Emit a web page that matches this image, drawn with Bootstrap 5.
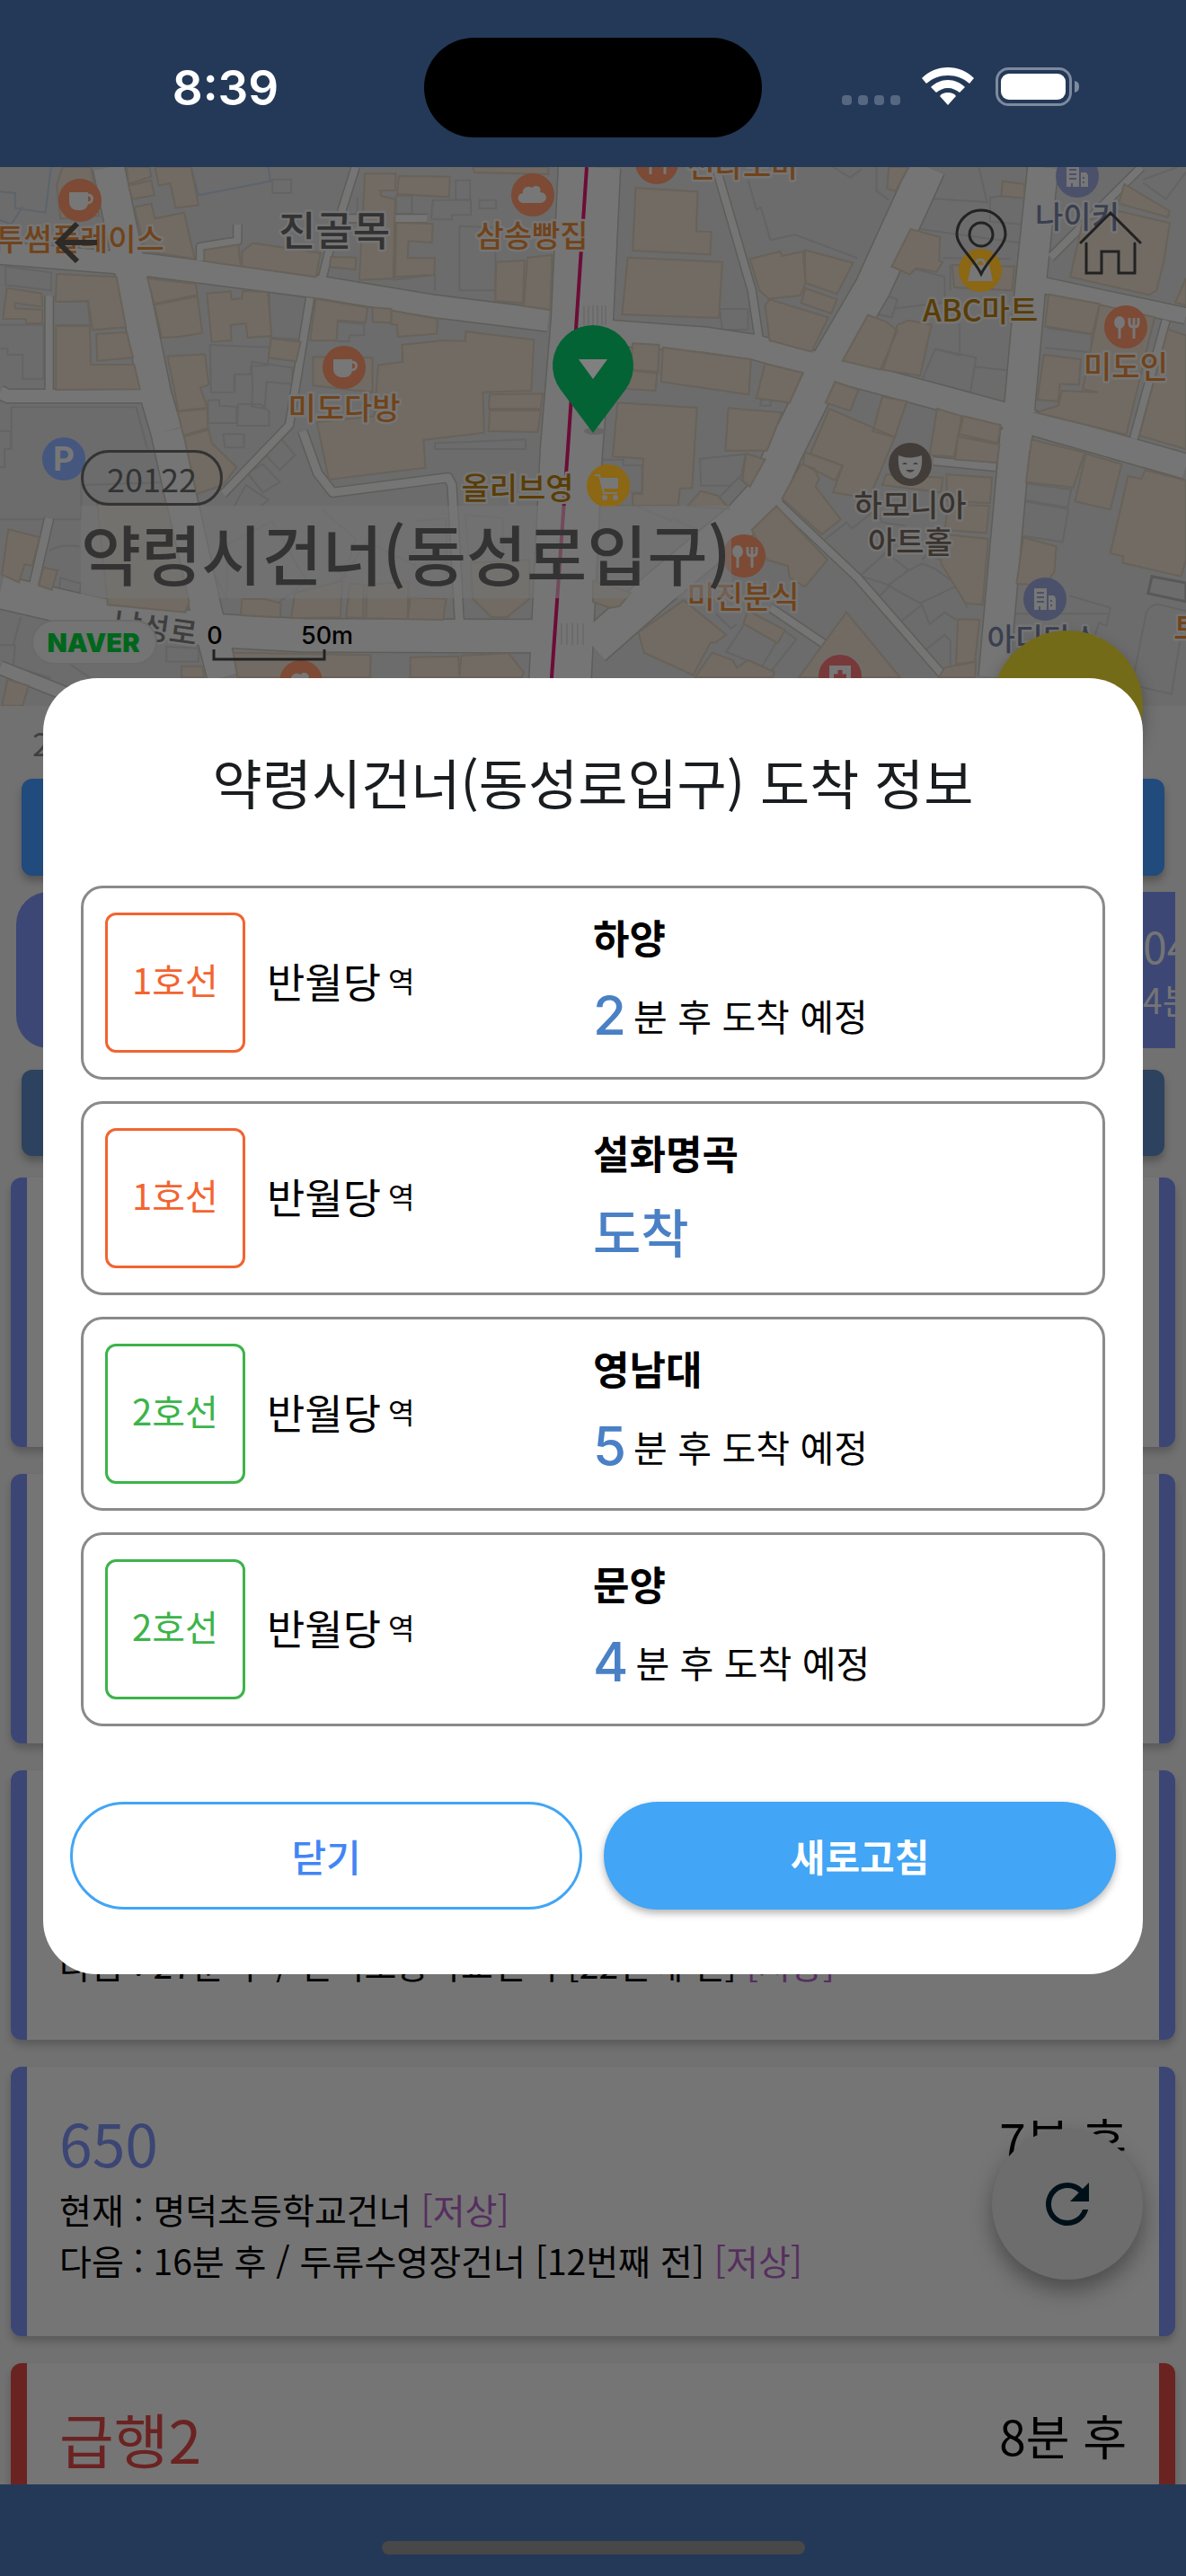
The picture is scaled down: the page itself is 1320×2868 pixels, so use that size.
<!DOCTYPE html>
<html lang="ko">
<head>
<meta charset="utf-8">
<meta name="viewport" content="width=device-width, initial-scale=1">
<title>약령시건너(동성로입구)</title>
<link href="https://cdn.jsdelivr.net/npm/bootstrap@5.3.0/dist/css/bootstrap.min.css" rel="stylesheet">
<style>
body{font-family:"Noto Sans CJK KR","Noto Sans",sans-serif;background:#717171;color:#000;font-size:39px;line-height:57px}
.status-bar{height:186px;background:#243957;color:#fff;padding-top:42px}
.island{width:376px;height:111px;border-radius:56px;background:#000}
.clock{font:600 53px/113px Inter,sans-serif;padding-left:30px}
.indicators{gap:24px;padding-right:30px;height:108px}
.map-area{height:600px;background:#6c6c6c}
.map-tools{padding:12px}
.tool{width:144px;height:144px;border:0;background:none;padding:0}
.stop-head{padding:0 90px 120px}
.stop-no{font-size:36px;line-height:56px;border:3px solid #333;border-radius:31px;padding:0 26px;color:#333}
.stop-name{font-size:73px;line-height:103px;font-weight:500;color:#333;background:rgba(117,117,117,.6)}
.ad-dot{width:168px;height:168px;border-radius:50%;background:#746b18;top:516px;right:48px;border:0;box-shadow:0 9px 18px rgba(0,0,0,.3)}
.meta-line{font-size:36px;line-height:81px;padding-left:36px;color:#3f3f3f}
.wide-btn{margin:0 24px;border:0;border-radius:12px;box-shadow:0 6px 9px rgba(0,0,0,.25)}
.wide-a{height:108px;background:#214a7d;margin-bottom:18px}
.wide-b{height:96px;background:#2c425e;margin-bottom:24px}
.strip{height:174px;margin:0 12px 24px 18px;background:#3d4776;border-radius:36px 0 0 36px;color:#747474;padding-left:1254px}
.strip-a{font-size:48px;line-height:64px}
.strip-b{line-height:57px}
.bus{height:300px;margin:0 12px 30px;border-radius:12px;background:#757575;border:solid #3c4675;border-width:0 18px;padding:42px 36px 56px;box-shadow:0 6px 9px rgba(0,0,0,.2)}
.bus-red{border-color:#6b2322}
.bus-no{font-size:66px;line-height:82px;color:#3c4675;margin-bottom:6px}
.bus-red .bus-no{color:#6b2322}
.bus-eta{font-size:53px;line-height:76px}
.low{color:#552f5e}
.fab{width:168px;height:168px;border-radius:50%;border:0;background:#6d6d6d;right:48px;bottom:330px;box-shadow:0 12px 24px rgba(0,0,0,.35)}
.nav-strip{height:102px;background:#243957;padding-top:63px}
.nav-pill{width:471px;height:15px;border-radius:8px;background:#484848}
.sheet-wrap{top:186px;bottom:102px;padding:0 48px;z-index:5}
.sheet{border-radius:60px;background:#fff;padding:72px 30px}
.sheet h1{font-size:60px;line-height:86px;font-weight:400;color:#191d20;margin-bottom:73px}
.arrivals{gap:24px;padding:0 12px;margin-bottom:84px}
.arrival{height:216px;border:3px solid #8a8a8a;border-radius:24px;padding:0 24px}
.line-box{width:156px;height:156px;border:3px solid;border-radius:12px;font-size:40px;margin-right:24px;padding-bottom:6px}
.line-1{color:#f26430}
.line-2{color:#3cb44a}
.station{font-size:46px;line-height:64px;padding-bottom:6px}
.station small{font-size:32px}
.dest{font-size:44px;line-height:60px;font-weight:700;margin-bottom:12px}
.eta{font-size:41px;line-height:90px}
.eta b{font-size:58px;font-weight:500;color:#4a80c5}
.eta .num{font-family:Inter,sans-serif;font-size:60px}
.sheet-btn{height:120px;border-radius:60px;font-size:42px;line-height:60px}
.btn-shut{border:3px solid #42a5f5;color:#4285f4;font-weight:500;background:#fff}
.btn-again{background:#42a5f5;color:#fff;font-weight:700;border:0;box-shadow:0 4px 9px rgba(0,0,0,.3)}
.road-edge *{fill:none;stroke:#5d5d59;vector-effect:non-scaling-stroke;stroke-linejoin:round}
.road-top *{fill:none;stroke:#757575;vector-effect:non-scaling-stroke;stroke-linejoin:round}
.bldg{fill:#716b64;stroke:#686259;stroke-width:2}
.bldg path,.plot path{vector-effect:non-scaling-stroke}
.plot{fill:none;stroke:#646464;stroke-width:2}
.poi{font-size:34px;font-weight:500;text-anchor:middle;paint-order:stroke;stroke:#757575;stroke-width:5px;stroke-linejoin:round}
</style>
<script src="https://cdn.jsdelivr.net/npm/bootstrap@5.3.0/dist/js/bootstrap.bundle.min.js"></script>
</head>
<body>
<div class="vh-100 d-flex flex-column position-relative overflow-hidden">
<header class="status-bar d-flex flex-shrink-0">
  <div class="clock flex-fill w-25 text-center">8:39</div>
  <div class="island flex-shrink-0"></div>
  <div class="indicators flex-fill w-25 d-flex justify-content-center align-items-center">
    <svg width="65" height="42" viewBox="0 0 65 42" fill="#566782"><rect y="31" width="11" height="11" rx="4"/><rect x="18" y="31" width="11" height="11" rx="4"/><rect x="36" y="31" width="11" height="11" rx="4"/><rect x="54" y="31" width="11" height="11" rx="4"/></svg>
    <svg width="58" height="42" viewBox="0 0 58 42" fill="#fff"><path d="M29 0C18 0 8 4 0 12l5 6c7-6 15-9 24-9s17 3 24 9l5-6C50 4 40 0 29 0zM29 14c-7 0-14 3-19 8l6 6c4-3 8-5 13-5s9 2 13 5l6-6c-5-5-12-8-19-8zM29 28c-4 0-7 1-9 4l9 10 9-10c-2-3-5-4-9-4z"/></svg>
    <svg width="93" height="43" viewBox="0 0 93 43"><rect x="1.500" y="1.500" width="82" height="40" rx="13" fill="none" stroke="#7e8a9e" stroke-width="3"/><rect x="6" y="7" width="72" height="29" rx="9" fill="#fff"/><path d="M88 15c4 1 5 3 5 6.500s-1 5.500-5 6.500z" fill="#7e8a9e"/></svg>
  </div>
</header>
<main class="flex-fill overflow-hidden">
<section class="map-area position-relative">
<svg class="d-block w-100 h-100" viewBox="0 0 1320 600" preserveAspectRatio="xMidYMid slice">
<defs>
<g id="cup"><circle r="24" fill="#7c4a35"/><path d="M-12-9H9V2c0 6-4 9-8 9h-4c-5 0-9-4-9-9z" fill="#777"/><path d="M8-6c7-1 8 9 0 9" fill="none" stroke="#777" stroke-width="3"/></g>
<g id="bread"><circle r="24" fill="#7c4a35"/><path d="M-12 9c-6-2-6-10 1-11-1-6 6-9 10-6 5-5 12 0 9 5 7 0 9 7 5 10-2 2-4 2-6 2z" fill="#777"/></g>
<g id="food"><circle r="24" fill="#7c4a35"/><ellipse cx="-7" cy="-5" rx="6" ry="7" fill="#777"/><path d="M-7 0v13M9-2v15M4-10v6q0 4 5 4t5-4v-6M9-10v8" stroke="#777" stroke-width="3" fill="none"/></g>
<g id="tower"><circle r="24" fill="#4b516a"/><path d="M-12-12H2V12h-14zM4-4h6l2 3v13H4z" fill="#777"/><path d="M-9-7h8M-9-2h8M-9 3h8M-6 8v4M7 1v2M7 6v2" stroke="#4b516a" stroke-width="2"/></g>
</defs>
<g class="plot">
<g transform="translate(0 -6) scale(.42088 .33333)">
<path d="M135 18L120 170 40 155 40 105 0 100M0 195L30 210 60 150M505 18L525 112 715 65 710 18" stroke="#5d646c"/>
<path d="M720 60h50v45h-50zM1205 62h38v65h-38zM1145 128h100v50h-50v15h-55zM1267 128h45v28h-45zM1215 215l95 5v210h-95zM1047 115h42v60h-42zM945 120v80M15 350l120 20v60L15 412zM148 468h85l5 78h-88M0 545h115v180H60v-80H20v-20H0M712 435l108 20-20 140-85-8zM895 535l68 7v38h-38l-3 20h-30M555 612l158 8-5 60-45 3v27h-43v60h-62zM665 668l108 20v55l-68-8-5 90-35-8 3-60zM630 810h60l22 25v47h-85zM550 797l30-2v20l45 3v55h-75zM30 820h330l30 140M30 820v140M1150 940l240-12v32h-240zM1040 395l110-18v55"/>
</g>
<g transform="translate(660 -6) scale(.42088 .33333)">
<path d="M410 60l22 100 12-8 25 110 65-18 165 78M750 18v80l32 30M1020 18l22 118M885 122l160 14M845 222l290 50M1080 115l-30 5v80l85 10M635 18l45 35 30-28M335 492h75v70l-68-2zM755 440l50 20-15 60-60-15M800 490l130-20v-85l-130-45M905 625l108 30-15 115-128-40zM970 540v108l-60-20M1010 685l85 12M1200 555l118 22v60l-122-15M945 345v85M925 322l180 3M1455 60l90-42M1455 70l60 55 53-90M445 795h25v20h-28zM705 880l33 20"/>
</g>
<g transform="translate(0 294) scale(.42088 .33333)">
<path d="M0 0h28v60H12v60H0M655 140l40-30 45 60-45 35zM695 70l45-50 40 60-40 50zM620 250l30-70 60 50-20 20M0 295h215V180l240-10M590 10h55v45h-50zM600 540v-160l120-80 90 200-80 80M850 260l90 100-30 130M440 770v-50l85 5v45zM130 400q30-25 80-15M380 410h160l60 150M160 490l55 20-10 60-50-20zM0 715h40l-5 70 100 40M55 620L35 715M980 750v72M175 730v40l70 60M900 500l70-130 130 80M1100 300l80-10v200M1240 420l-10-140 100 10v120"/>
</g>
<g transform="translate(660 294) scale(.42088 .33333)">
<path d="M283 92l120-15-10 70-30 35h-78zM385 155l28 30-52 70-30-30zM20 95h60v20h50v90h-30M610 365l60-60 15 20 60-60M870 430l15-20 50 30 55 150M705 485l70-80 60 60-55 50 85 60 100-60-60-55-35-18-45 30M785 515l-75-30 35 85zM810 640l60-60 20 65 40-40 30 25M870 740l60-60 15 20v105M400 645l85 60-38 80-95-48zM510 670l28 25-75 120M325 610l40 50 15-15M1145 175l120 20-10 60-115-25M1140 235l117 25-15 110-105-20M1260 550l108 40-10 60-20-10-10 40M1568 600l-75-22q-25 5-30 30l-38 240 105 30 30-240M1100 610h260M745 260l20 45 60 10M0 250h110l100 50M210 290l100 60-80 130"/>
<path d="M1478 485l90 22v62l-100-27z" stroke="#585858" stroke-width="3"/>
</g>
</g>
<!-- streets -->
<g class="road-edge">
<g transform="translate(0 -6) scale(.42088 .33333)"><path d="M0 305L390 345 850 420 1150 483 1450 530" stroke-width="27"/><path d="M287 18L348 385 412 780 440 900" stroke-width="37"/><path d="M0 770L20 783H410" stroke-width="17"/><path d="M130 448V775M940 18L870 300 850 400M530 330V285L628 265V210M1130 190H880M820 455L765 880 590 1110" stroke-width="11"/></g>
<g transform="translate(660 -6) scale(.42088 .33333)"><path d="M0 567L300 595 430 620 600 680 1130 860 1568 1018" stroke-width="30"/><path d="M885 18L740 420 620 680 510 960" stroke-width="42"/><path d="M1190 18L1155 440 1118 960" stroke-width="36"/><path d="M1180 410L1568 515" stroke-width="20"/><path d="M325 18L420 430 440 600M1210 320L1450 18M1515 530L1430 925" stroke-width="11"/></g>
<g transform="translate(0 294) scale(.42088 .33333)"><path d="M440 0L545 600 590 822" stroke-width="37"/><path d="M0 537L250 610 560 665 800 682 1450 685" stroke-width="39"/><path d="M0 790L190 885" stroke-width="17"/><path d="M800 0L840 140 880 205 1185 155 1195 180 1215 640M130 290L90 510" stroke-width="12"/></g>
<g transform="translate(660 294) scale(.42088 .33333)"><path d="M530 0L455 210 390 300 180 520 0 720" stroke-width="43"/><path d="M1118 0L1060 822" stroke-width="36"/><path d="M490 240L700 490 930 822M470 590L610 710M900 100L1065 120" stroke-width="11"/></g>
<path d="M656 0L648 170 636 314 622 600" stroke-width="71"/>
</g>
<g class="road-top">
<g transform="translate(0 -6) scale(.42088 .33333)"><path d="M0 305L390 345 850 420 1150 483 1450 530" stroke-width="24"/><path d="M287 18L348 385 412 780 440 900" stroke-width="34"/><path d="M0 770L20 783H410" stroke-width="14"/><path d="M130 448V775M940 18L870 300 850 400M530 330V285L628 265V210M1130 190H880M820 455L765 880 590 1110" stroke-width="8"/></g>
<g transform="translate(660 -6) scale(.42088 .33333)"><path d="M0 567L300 595 430 620 600 680 1130 860 1568 1018" stroke-width="27"/><path d="M885 18L740 420 620 680 510 960" stroke-width="39"/><path d="M1190 18L1155 440 1118 960" stroke-width="33"/><path d="M1180 410L1568 515" stroke-width="17"/><path d="M325 18L420 430 440 600M1210 320L1450 18M1515 530L1430 925" stroke-width="8"/></g>
<g transform="translate(0 294) scale(.42088 .33333)"><path d="M440 0L545 600 590 822" stroke-width="34"/><path d="M0 537L250 610 560 665 800 682 1450 685" stroke-width="36"/><path d="M0 790L190 885" stroke-width="14"/><path d="M800 0L840 140 880 205 1185 155 1195 180 1215 640M130 290L90 510" stroke-width="9"/></g>
<g transform="translate(660 294) scale(.42088 .33333)"><path d="M530 0L455 210 390 300 180 520 0 720" stroke-width="40"/><path d="M1118 0L1060 822" stroke-width="33"/><path d="M490 240L700 490 930 822M470 590L610 710M900 100L1065 120" stroke-width="8"/></g>
<path d="M656 0L648 170 636 314 622 600" stroke-width="68"/>
</g>
<!-- buildings -->
<g class="bldg">
<g transform="translate(0 -6) scale(.42088 .33333)"><path d="M165 18L240 18 262 180 160 190 150 80zM335 18L395 18 400 50 340 75zM340 80L400 62 408 112 350 125zM410 18L505 18 525 145 465 155 450 72 420 80zM355 152L400 140 410 190 487 170 515 325 385 300zM540 295L630 277 637 350 540 332zM640 300L668 272 848 305 835 385 640 350zM965 40L1047 40 1045 95 1005 97 1008 115 1045 125 1040 390 950 395zM1055 48L1190 50 1187 118 1050 108zM1080 205L1145 208 1142 270 1080 265 1078 322 1150 322 1148 378 1045 385 1048 205zM875 318L942 320 940 360 872 352zM1312 335L1387 330 1383 472 1310 465zM1395 320L1460 312 1455 495 1385 482zM1250 18L1450 18 1450 42 1255 36z"/><path d="M150 375L308 385 333 553 245 562 233 465 147 468zM255 575L335 570 352 655 257 665zM148 548L237 548 240 678 355 678 370 760 148 762zM18 422L110 440 112 485 40 472V490L112 495V540L70 540 68 525 8 525zM390 390L518 408 522 445 408 475zM408 478L522 450 535 572 475 585 428 588zM547 440L610 433 612 460 640 457 642 432 708 435 718 582 655 588 650 540 610 545 612 597 560 602zM835 458L972 487 967 537 893 530 890 597 820 597zM985 487L1035 492 1035 538 985 535zM1035 497L1157 525 1155 575 1052 585 1050 545 1033 542zM717 590L795 602 783 667 710 655zM828 652L985 655 985 770 828 748zM1232 567L1412 595 1405 765 1277 770 1280 905 1120 930 1125 1022 870 1062 838 870 990 850 1000 680 1065 668 1063 612 1170 597 1230 600zM1295 778L1435 775 1430 825 1292 825zM1295 830L1430 830 1422 903 1292 900zM443 650L542 643 552 745 530 755 548 822 472 832zM470 835L548 825 550 890 485 915zM487 918L552 895 560 940 625 1020 590 1080 520 1110z"/></g>
<g transform="translate(660 -6) scale(.42088 .33333)"><path d="M113 88L277 100 273 232 313 235 310 310 105 297zM92 320L342 335 333 522 77 510zM415 325L495 300 500 315 555 300 562 408 548 447 465 458 440 430zM560 295L688 338 645 442 562 405zM562 423L645 460 630 507 550 472zM467 460L622 520 578 635 467 597 455 480zM840 225L918 252 915 330 925 335 908 368 855 355 838 377 790 350zM727 512L775 535 805 565 760 695 660 665zM805 545L835 530 895 545 865 715 767 695zM782 18L835 18 800 98 778 90zM1083 65L1142 75 1140 122 1080 115zM1205 443L1340 475 1320 575 1195 550zM1340 478L1485 520 1410 912 1172 838 1230 815 1240 765 1335 770 1295 760zM1192 645L1290 660 1285 745 1235 742 1230 800 1175 795zM1520 560L1568 580V960L1445 915zM1390 165L1525 205 1510 330 1490 430 1470 445 1262 385 1295 200zM1405 75L1525 165 1520 185 1390 140zM1540 470L1568 390V480z"/><path d="M105 607L175 612 172 702 100 695zM95 697L170 707 165 765 75 758zM185 620L418 660 412 778 180 735zM455 675L555 705 520 805 432 790zM65 805L275 822 262 1090 230 1092 225 1150 105 1150 105 1110 130 1110 133 992 52 985zM358 823L500 838 460 965 350 965zM640 735L702 762 680 832 615 805zM765 785L830 800 798 920 740 900zM910 825L975 850 955 985 890 980zM980 850L1078 880 1070 940 968 910zM965 918L1075 945 1068 1005 958 995zM950 345L1115 350 1108 430 955 420zM625 825L798 920 730 1125 635 1105 660 1015 575 975z"/></g>
<g transform="translate(0 294) scale(.42088 .33333)"><path d="M257 240L440 240 500 570 490 605 285 580zM22 328L105 355 85 450 65 445 50 505 5 480zM115 455L152 465 137 530 102 515zM640 560L700 560 742 575 742 622 637 615zM780 540L905 500 900 622 770 625zM925 510L962 512 960 625 915 622zM970 512L1080 505 1078 628 968 625zM1085 555L1180 560 1172 630 1078 628zM1245 440L1400 430 1400 560 1340 622 1300 622 1250 560zM617 740L980 748 978 822 628 822zM1085 755L1212 752 1215 822 1085 822zM1220 750L1345 742 1385 805 1380 822 1215 822zM480 785L535 785 540 822 480 822zM20 830L75 850 60 917 5 917z"/></g>
<g transform="translate(660 294) scale(.42088 .33333)"><path d="M550 110L585 125 598 160 588 185 655 295 605 345 500 225zM560 70L660 115 640 165 555 110zM485 250L620 430 560 520 520 490 515 450 460 430 420 330zM285 200L330 215 360 260 250 250zM405 75L455 95 415 185 395 165zM775 145L925 155 920 205 765 180zM935 145L1055 155 1050 240 935 235zM940 245L1048 250 1040 340 930 330zM930 345L1045 360 1030 580 985 575 920 440zM1138 355L1225 385 1220 470 1195 515 1120 510zM1160 28L1300 72 1270 188 1145 170zM1303 75L1398 110 1368 262 1275 235zM1415 150L1450 160 1460 130 1568 165V430L1555 485 1400 440 1402 418 1368 408zM240 565L352 680 325 705 310 708 265 815 135 740 120 672zM670 605L812 822H545zM315 740L370 765 380 790 410 765 480 805 475 822H270zM410 600L508 665 488 708 398 642zM965 628L1022 630 1010 770 960 778zM930 790L1012 770 1010 822H915zM0 500L100 540 70 585 45 590 0 570z"/></g>
</g>
<path d="M650 154v22M655 154v22M660 154v22M665 154v22M670 154v22M674 154v22M625 508v24M631 508v24M637 508v24M643 508v24M649 508v24" stroke="#6b6b6b" stroke-width="2"/>
<path d="M653 0L641 181 632 314 614 568 612 600" fill="none" stroke="#6d0c36" stroke-width="4"/>
<g class="poi" fill="#71431a">
<text x="89" y="93">투썸플레이스</text><text x="592" y="89">삼송빵집</text><text x="383" y="281">미도다방</text><text x="827" y="11">전라도마</text><text x="1253" y="235">미도인</text><text x="827" y="491">미진분식</text><text x="1322" y="526">토</text>
<g fill="#5a3d06"><text x="1091" y="172">ABC마트</text><text x="576" y="370">올리브영</text></g>
<g fill="#3a3f50"><text x="1199" y="68">나이키</text><text x="1161" y="538">아디다스</text></g>
<g fill="#3a332e"><text x="1013" y="389">하모니아</text><text x="1013" y="430">아트홀</text></g>
<text x="372" y="88" fill="#333" font-size="45">진골목</text>
<text x="172" y="526" fill="#3e3e3e" transform="rotate(8 172 520)">남성로</text>
</g>
<use href="#cup" x="89" y="37"/><use href="#cup" x="383" y="223"/><use href="#bread" x="593" y="31"/><use href="#bread" x="335" y="573"/><use href="#food" x="731" y="-5"/><use href="#food" x="1253" y="178"/><use href="#food" x="828" y="433"/><use href="#tower" x="1199" y="10"/><use href="#tower" x="1163" y="481"/>
<g transform="translate(1091 115)"><circle r="24" fill="#8c6714"/><path d="M-10-6h20l4 18h-28z" fill="#777"/><path d="M-5-5q0-7 5-7t5 7" fill="none" stroke="#777" stroke-width="3"/></g>
<g transform="translate(677 355)"><circle r="24" fill="#8c6714"/><path d="M-15-12h5l5 20h15" fill="none" stroke="#777" stroke-width="2"/><path d="M-9-9h20v12h-17z" fill="#777"/><circle cx="-4" cy="13" r="3" fill="#777"/><circle cx="8" cy="13" r="3" fill="#777"/></g>
<g transform="translate(1013 331)"><circle r="24" fill="#423d39"/><path d="M-13-10q13 5 26 0c1 14-2 25-13 26-11-1-14-12-13-26z" fill="#777"/><path d="M-9 0q3-4 6 0M3 0q3-4 6 0M-5 6q5 6 10 0z" fill="#423d39"/></g>
<g transform="translate(935 567)"><circle r="24" fill="#77393a"/><path d="M-12-12h24v24h-24z" fill="#777"/><path d="M0-7V7M-7 0H7" stroke="#77393a" stroke-width="5"/></g>
<circle cx="71" cy="325" r="24" fill="#45577f"/><text x="71" y="338" text-anchor="middle" font-family="Inter" font-weight="700" font-size="37" fill="#777">P</text>
<ellipse cx="662" cy="294" rx="12" ry="4" fill="#666"/>
<path d="M660 296L624 248A45 45 0 1 1 696 248z" fill="#046335"/><path d="M644 214h32l-16 22z" fill="#808080"/>
<rect x="36" y="505" width="138" height="48" rx="24" fill="#747474" stroke="#6a6a6a" stroke-width="2"/>
<text x="104" y="540" text-anchor="middle" font-family="Inter" font-weight="900" font-size="29" fill="#00661c">NAVER</text>
<g font-family="Inter" font-weight="500" font-size="27" text-anchor="middle" fill="#000"><text x="239" y="531">0</text><text x="364" y="531">50m</text></g>
<path d="M238 537v11h123v-11" fill="none" stroke="#222" stroke-width="3"/>
</svg>
<div class="position-absolute top-0 start-0 w-100 h-100 d-flex flex-column justify-content-between">
  <div class="map-tools d-flex">
    <button class="tool me-auto" aria-label="뒤로"><svg class="d-block mx-auto" width="48" height="48" viewBox="0 0 48 48" fill="none" stroke="#2d2a28" stroke-width="6"><path d="M26 3L5 24 26 45M5 24h43"/></svg></button>
    <button class="tool" aria-label="위치"><svg class="d-block mx-auto" width="60" height="76" viewBox="0 0 60 76" fill="none" stroke="#222" stroke-width="3"><path d="M30 73C22 56 3 42 3 29a27 27 0 0 1 54 0C57 42 38 56 30 73z"/><circle cx="30" cy="29" r="13"/></svg></button>
    <button class="tool" aria-label="홈"><svg class="d-block mx-auto" width="72" height="72" viewBox="0 0 72 72" fill="none" stroke="#222" stroke-width="3" stroke-linecap="round"><path d="M3 36L36 3 69 36M9 37v33h17V46h19v24h18V37"/></svg></button>
  </div>
  <div class="stop-head d-flex flex-column align-items-start">
    <div class="stop-no">20122</div>
    <div class="stop-name">약령시건너(동성로입구)</div>
  </div>
</div>
<button class="ad-dot position-absolute" aria-label="즐겨찾기"></button>
</section>
<section class="d-flex flex-column">
  <div class="meta-line">2</div>
  <button class="wide-btn wide-a" aria-label="지하철 도착 정보"></button>
  <div class="strip overflow-hidden text-nowrap d-flex flex-column justify-content-center">
    <div class="strip-a">04</div><div class="strip-b">4분</div>
  </div>
  <button class="wide-btn wide-b" aria-label="노선 보기"></button>
  <article class="bus flex-shrink-0"></article>
  <article class="bus flex-shrink-0"></article>
  <article class="bus flex-shrink-0 d-flex flex-column"><div class="mt-auto">다음 : 27분 후 / 신덕초등학교건너 [22번째 전] <span class="low">[저상]</span></div></article>
  <article class="bus flex-shrink-0">
    <div class="d-flex justify-content-between"><div class="bus-no">650</div><div class="bus-eta">7분 후</div></div>
    <div>현재 : 명덕초등학교건너 <span class="low">[저상]</span></div>
    <div>다음 : 16분 후 / 두류수영장건너 [12번째 전] <span class="low">[저상]</span></div>
  </article>
  <article class="bus bus-red flex-shrink-0">
    <div class="d-flex justify-content-between"><div class="bus-no">급행2</div><div class="bus-eta">8분 후</div></div>
  </article>
</section>
</main>
<footer class="nav-strip flex-shrink-0 d-flex justify-content-center"><div class="nav-pill"></div></footer>
<button class="fab position-absolute" aria-label="새로고침"><svg class="d-block mx-auto" width="72" height="72" viewBox="0 0 24 24" fill="#001018"><path d="M17.650 6.350A7.960 7.960 0 0 0 12 4a8 8 0 1 0 7.730 10h-2.080A6 6 0 1 1 12 6c1.660 0 3.140.69 4.220 1.780L13 11h7V4z"/></svg></button>
<div class="sheet-wrap position-absolute start-0 end-0 d-flex align-items-center">
  <div class="sheet w-100" role="dialog" aria-modal="true" aria-labelledby="sheetTitle">
    <h1 id="sheetTitle" class="text-center">약령시건너(동성로입구) 도착 정보</h1>
    <div class="arrivals d-flex flex-column">
      <div class="arrival d-flex align-items-center">
        <div class="col-6 d-flex align-items-center"><div class="line-box line-1 d-flex align-items-center justify-content-center">1호선</div><div class="station d-flex align-items-center gap-2"><span>반월당</span><small>역</small></div></div>
        <div class="col-6"><div class="dest">하양</div><div class="eta d-flex align-items-center gap-2"><b class="num">2</b><span>분 후 도착 예정</span></div></div>
      </div>
      <div class="arrival d-flex align-items-center">
        <div class="col-6 d-flex align-items-center"><div class="line-box line-1 d-flex align-items-center justify-content-center">1호선</div><div class="station d-flex align-items-center gap-2"><span>반월당</span><small>역</small></div></div>
        <div class="col-6"><div class="dest">설화명곡</div><div class="eta d-flex align-items-center"><b>도착</b></div></div>
      </div>
      <div class="arrival d-flex align-items-center">
        <div class="col-6 d-flex align-items-center"><div class="line-box line-2 d-flex align-items-center justify-content-center">2호선</div><div class="station d-flex align-items-center gap-2"><span>반월당</span><small>역</small></div></div>
        <div class="col-6"><div class="dest">영남대</div><div class="eta d-flex align-items-center gap-2"><b class="num">5</b><span>분 후 도착 예정</span></div></div>
      </div>
      <div class="arrival d-flex align-items-center">
        <div class="col-6 d-flex align-items-center"><div class="line-box line-2 d-flex align-items-center justify-content-center">2호선</div><div class="station d-flex align-items-center gap-2"><span>반월당</span><small>역</small></div></div>
        <div class="col-6"><div class="dest">문양</div><div class="eta d-flex align-items-center gap-2"><b class="num">4</b><span>분 후 도착 예정</span></div></div>
      </div>
    </div>
    <div class="d-flex gap-4">
      <button class="btn sheet-btn btn-shut flex-fill w-50">닫기</button>
      <button class="btn sheet-btn btn-again flex-fill w-50">새로고침</button>
    </div>
  </div>
</div>
</div>
</body>
</html>
